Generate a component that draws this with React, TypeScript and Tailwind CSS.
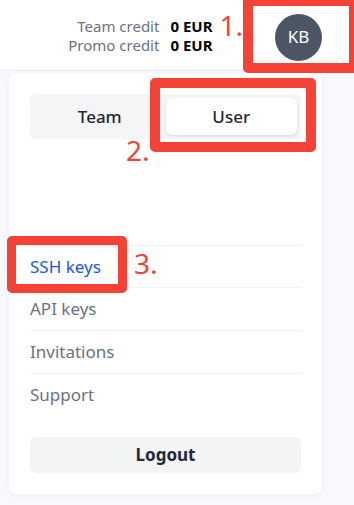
import React from "react";

export default function App() {
  const font = { fontFamily: '"Noto Sans", "Open Sans", sans-serif' };
  return (
    <div className="relative w-[354px] h-[505px] bg-[#f8f9fe] overflow-hidden" style={font}>
      <header className="h-[71px] bg-white border-b border-[#eceef5] flex items-center justify-end pr-[32px]">
        <div className="grid grid-cols-[auto_auto] gap-x-[11px] text-[15px] leading-[19px] mr-[7px] mt-[1px]">
          <span className="text-right text-[#6b7280]">Team credit</span>
          <span className="font-bold text-black">0 EUR</span>
          <span className="text-right text-[#6b7280]">Promo credit</span>
          <span className="font-bold text-black">0 EUR</span>
        </div>
        <span className="text-[#f44336] text-[28px] leading-none mr-[32px] -mt-[20px]">1.</span>
        <div className="w-[47px] h-[47px] rounded-full bg-[#4b5563] text-white flex items-center justify-center text-[17px] mt-[4px]">
          KB
        </div>
      </header>

      <div className="ml-[9px] w-[313px] mt-[2px] bg-white rounded-lg shadow-[0_1px_6px_rgba(80,90,160,0.08)] px-[21px] pt-[21px] pb-[21px]">
        <div className="h-[45px] bg-[#f5f5f7] rounded-md p-[4px] flex">
          <div className="flex-1 flex items-center justify-center text-[17px] font-medium text-[#1f2937]">Team</div>
          <div className="flex-1 flex items-center justify-center text-[17px] font-medium text-[#1f2937] bg-white rounded-md shadow-[0_1px_3px_rgba(0,0,0,0.12)]">User</div>
        </div>
        <div className="mt-[106px]">
          <div className="h-[42px] border-t border-[#eef0f3] flex items-center text-[17px] text-[#1a56f0]">SSH keys</div>
          <div className="h-[43px] border-t border-[#eef0f3] flex items-center text-[17px] text-[#6b7280]">API keys</div>
          <div className="h-[43px] border-t border-[#eef0f3] flex items-center text-[17px] text-[#6b7280]">Invitations</div>
          <div className="h-[43px] border-t border-[#eef0f3] flex items-center text-[17px] text-[#6b7280]">Support</div>
        </div>
        <button className="mt-[21px] w-full h-[36px] bg-[#f3f4f4] rounded-md text-[17px] font-bold text-[#1f2937]">Logout</button>
      </div>

      {/* annotations */}
      <div className="absolute left-[243px] -top-[4px] w-[116px] h-[77px] border-[10px] border-[#f44336] rounded-[5px]" />
      <div className="absolute left-[150px] top-[78px] w-[166px] h-[74px] border-[10px] border-[#f44336] rounded-[5px]" />
      <span className="absolute left-[126px] top-[136px] text-[#f44336] text-[28px] leading-none">2.</span>
      <div className="absolute left-[7px] top-[236px] w-[120px] h-[57px] border-[9px] border-[#f44336] rounded-[5px]" />
      <span className="absolute left-[134px] top-[249px] text-[#f44336] text-[28px] leading-none">3.</span>
    </div>
  );
}
